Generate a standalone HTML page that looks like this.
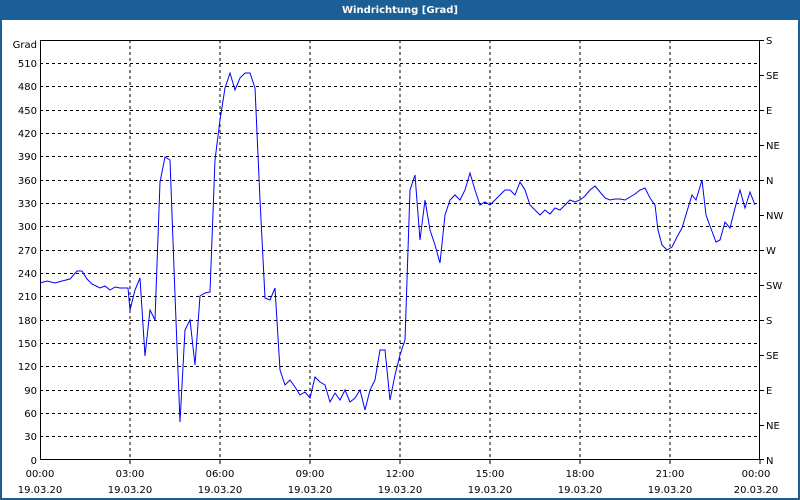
<!DOCTYPE html>
<html><head><style>
html,body{margin:0;padding:0;background:#fff}
svg{display:block}
text{font-family:"DejaVu Sans","Liberation Sans",sans-serif;font-size:10px;fill:#000}
</style></head><body>
<svg width="800" height="500" viewBox="0 0 800 500" xmlns="http://www.w3.org/2000/svg">
<rect x="0" y="0" width="800" height="500" fill="#1c5f97"/>
<rect x="2" y="20" width="796" height="478" fill="#fff"/>
<text x="400" y="13" text-anchor="middle" style="font-weight:bold;fill:#fff;font-size:10px">Windrichtung [Grad]</text>
<g stroke="#000" stroke-width="1" stroke-dasharray="3,3" shape-rendering="crispEdges">
<path d="M130 40V460M220 40V460M310 40V460M400 40V460M490 40V460M580 40V460M670 40V460"/>
<path d="M40 63.5H760M40 86.5H760M40 110.5H760M40 133.5H760M40 156.5H760M40 180.5H760M40 203.5H760M40 226.5H760M40 250.5H760M40 273.5H760M40 296.5H760M40 320.5H760M40 343.5H760M40 366.5H760M40 390.5H760M40 413.5H760M40 436.5H760"/>
</g>
<g stroke="#000" stroke-width="1" shape-rendering="crispEdges" fill="none">
<rect x="40.5" y="40.5" width="719" height="419"/>
<path d="M130 460v4M220 460v4M310 460v4M400 460v4M490 460v4M580 460v4M670 460v4M760 460v4"/>
<path d="M760 40.5h4M760 75.5h4M760 110.5h4M760 145.5h4M760 180.5h4M760 215.5h4M760 250.5h4M760 285.5h4M760 320.5h4M760 355.5h4M760 390.5h4M760 425.5h4M760 459.5h4"/>
</g>
<polyline fill="none" stroke="#0000ff" stroke-width="1" points="40,283 47,281 55,283 62,281 70,279 77,271 82,271 87,279 92,284 100,288 105,286 110,290 115,287 120,288 128,288 130,310 135,290 140,278 145,356 150,310 155,320 160,182 165,157 170,160 175,295 180,422 185,330 190,320 195,365 200,296 205,293 210,292 215,160 220,120 225,88 230,73 235,90 240,78 245,73 250,73 255,88 260,200 265,298 270,300 275,288 280,370 285,385 290,380 295,387 300,395 305,392 310,398 315,377 320,382 325,385 330,402 335,393 340,400 345,390 350,402 355,398 360,390 365,410 370,390 375,380 380,350 385,350 390,400 395,375 400,355 405,340 410,190 415,175 420,240 425,200 430,230 435,245 440,263 445,215 450,200 455,195 460,200 465,190 470,173 475,190 480,205 485,202 490,205 495,200 500,195 505,190 510,190 515,195 520,182 525,190 530,205 535,210 540,215 545,210 550,214 555,208 560,210 565,205 570,200 575,202 580,200 585,196 590,190 595,186 600,192 605,198 610,200 615,199 620,199 625,200 630,197 635,194 640,190 645,188 650,198 655,205 658,230 662,245 667,250 672,247 677,237 682,228 688,208 692,195 696,200 702,180 706,215 710,226 716,242 720,240 725,222 730,228 735,208 740,190 745,208 750,192 755,205"/>
<g text-anchor="end">
<text x="37" y="48">Grad</text>
<text x="37" y="67">510</text><text x="37" y="90">480</text><text x="37" y="114">450</text><text x="37" y="137">420</text><text x="37" y="160">390</text><text x="37" y="184">360</text><text x="37" y="207">330</text><text x="37" y="230">300</text><text x="37" y="254">270</text><text x="37" y="277">240</text><text x="37" y="300">210</text><text x="37" y="324">180</text><text x="37" y="347">150</text><text x="37" y="370">120</text><text x="37" y="394">90</text><text x="37" y="417">60</text><text x="37" y="440">30</text><text x="37" y="464">0</text>
</g>
<g>
<text x="766" y="44">S</text><text x="766" y="79">SE</text><text x="766" y="114">E</text><text x="766" y="149">NE</text><text x="766" y="184">N</text><text x="766" y="219">NW</text><text x="766" y="254">W</text><text x="766" y="289">SW</text><text x="766" y="324">S</text><text x="766" y="359">SE</text><text x="766" y="394">E</text><text x="766" y="429">NE</text><text x="766" y="464">N</text>
</g>
<g text-anchor="middle">
<text x="40" y="477">00:00</text><text x="40" y="493">19.03.20</text>
<text x="130" y="477">03:00</text><text x="130" y="493">19.03.20</text>
<text x="220" y="477">06:00</text><text x="220" y="493">19.03.20</text>
<text x="310" y="477">09:00</text><text x="310" y="493">19.03.20</text>
<text x="400" y="477">12:00</text><text x="400" y="493">19.03.20</text>
<text x="490" y="477">15:00</text><text x="490" y="493">19.03.20</text>
<text x="580" y="477">18:00</text><text x="580" y="493">19.03.20</text>
<text x="670" y="477">21:00</text><text x="670" y="493">19.03.20</text>
<text x="756" y="477">00:00</text><text x="756" y="493">20.03.20</text>
</g>
</svg>
</body></html>
